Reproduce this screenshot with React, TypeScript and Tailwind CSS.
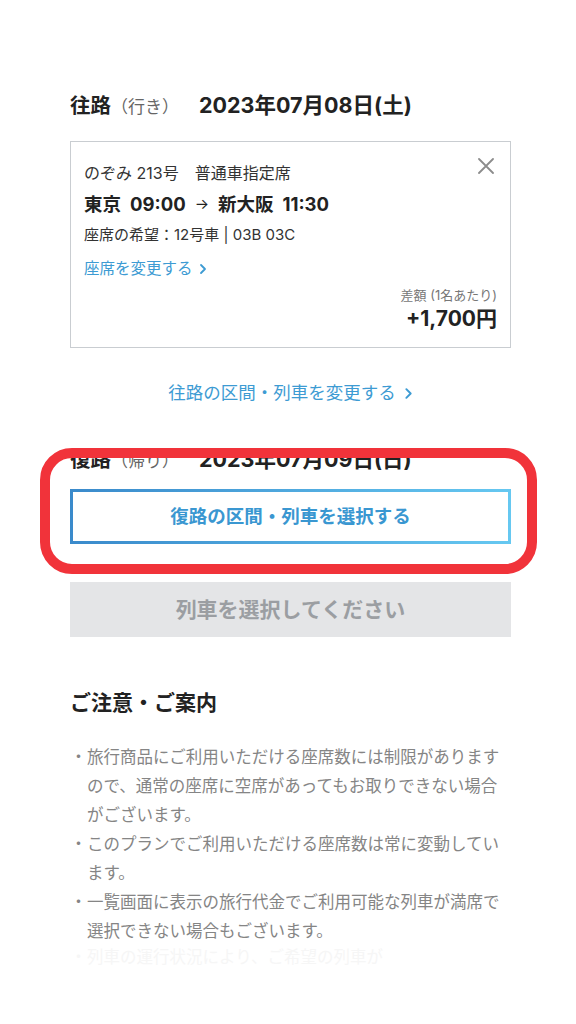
import React from "react";

const notes = [
  "旅行商品にご利用いただける座席数には制限がありますので、通常の座席に空席があってもお取りできない場合がございます。",
  "このプランでご利用いただける座席数は常に変動しています。",
  "一覧画面に表示の旅行代金でご利用可能な列車が満席で選択できない場合もございます。",
];

function Chevron({ className }: { className?: string }) {
  return (
    <svg viewBox="0 0 8 12" className={className} fill="none">
      <path d="M2 2l4 4-4 4" stroke="currentColor" strokeWidth="1.8" strokeLinecap="round" strokeLinejoin="round" />
    </svg>
  );
}

function DayHeader({ leg, sub, date }: { leg: string; sub: string; date: string }) {
  return (
    <h2 className="flex items-baseline text-[#222]">
      <span className="text-[20.5px] font-bold leading-[28px]">{leg}</span>
      <span className="text-[17px] leading-[28px] text-[#666]">（{sub}）</span>
      <span className="ml-[20px] text-[21.5px] font-bold leading-[28px]">{date}</span>
    </h2>
  );
}

export default function App() {
  return (
    <div
      className="relative h-[1024px] w-[576px] overflow-hidden bg-white pl-[70px] pr-[65px] pt-[91px]"
      style={{ fontFamily: 'Inter, "Noto Sans CJK JP", "Noto Sans", sans-serif' }}
    >
      <DayHeader leg="往路" sub="行き" date="2023年07月08日(土)" />

      <section className="relative mt-[20px] border border-[#c9cdd1] px-[13px] pb-[14px] pt-[20px] text-[#333]">
        <button className="absolute right-[16px] top-[16px] text-[#8c8c8c]">
          <svg viewBox="0 0 16 16" className="h-[16px] w-[16px]" fill="none">
            <path d="M1 1l14 14M15 1L1 15" stroke="currentColor" strokeWidth="1.8" strokeLinecap="round" />
          </svg>
        </button>
        <p className="text-[16px] leading-[22px]">のぞみ 213号　普通車指定席</p>
        <p className="mt-[7px] flex items-center gap-[9px] text-[18.5px] font-bold leading-[26px] text-[#222]">
          <span>東京</span>
          <span>09:00</span>
          <span className="text-[15px] font-normal">→</span>
          <span>新大阪</span>
          <span>11:30</span>
        </p>
        <p className="mt-[8px] text-[15px] leading-[20px]">座席の希望：12号車 | 03B 03C</p>
        <a className="mt-[13px] flex items-center gap-[6px] text-[15.5px] leading-[22px] text-[#3d9bd3]">
          座席を変更する
          <Chevron className="h-[12px] w-[8px]" />
        </a>
        <div className="mt-[6px] flex flex-col items-end">
          <span className="text-[13px] leading-[18px] text-[#777]">差額 (1名あたり)</span>
          <span className="mt-[1px] text-[21px] font-bold leading-[28px] text-[#222]">+1,700円</span>
        </div>
      </section>

      <a className="mt-[33px] flex items-center justify-center gap-[8px] text-[17.5px] leading-[24px] text-[#3d9bd3]">
        往路の区間・列車を変更する
        <Chevron className="h-[13px] w-[9px]" />
      </a>

      <div className="mt-[40px]">
        <DayHeader leg="復路" sub="帰り" date="2023年07月09日(日)" />
      </div>

      <button className="mt-[14px] block h-[55px] w-full bg-gradient-to-r from-[#3a8acb] to-[#66c8f1] p-[3px]">
        <span className="flex h-full w-full items-center justify-center bg-white text-[18.5px] font-bold text-[#3a97d1]">
          復路の区間・列車を選択する
        </span>
      </button>

      <button className="mt-[38px] flex h-[55px] w-full items-center justify-center bg-[#e4e5e7] text-[21px] font-bold text-[#9b9ea2]">
        列車を選択してください
      </button>

      <h3 className="mt-[52px] text-[21px] font-bold leading-[28px] text-[#222]">ご注意・ご案内</h3>

      <ul className="mt-[26px] flex flex-col text-[16.5px] leading-[29px] text-[#858585]">
        {notes.map((note) => (
          <li key={note} className="flex">
            <span className="w-[17px] shrink-0 text-center">・</span>
            <span className="w-[414px]">{note}</span>
          </li>
        ))}
        <li className="-mt-[3px] flex text-[#f6f6f6]">
          <span className="w-[17px] shrink-0 text-center">・</span>
          <span className="w-[414px]">列車の運行状況により、ご希望の列車が</span>
        </li>
      </ul>

      {/* red annotation frame */}
      <div className="pointer-events-none absolute left-[40px] top-[448px] h-[126px] w-[497px] rounded-[32px] border-[10px] border-[#f1333a] shadow-[0_0_0_5px_white]" />
    </div>
  );
}
